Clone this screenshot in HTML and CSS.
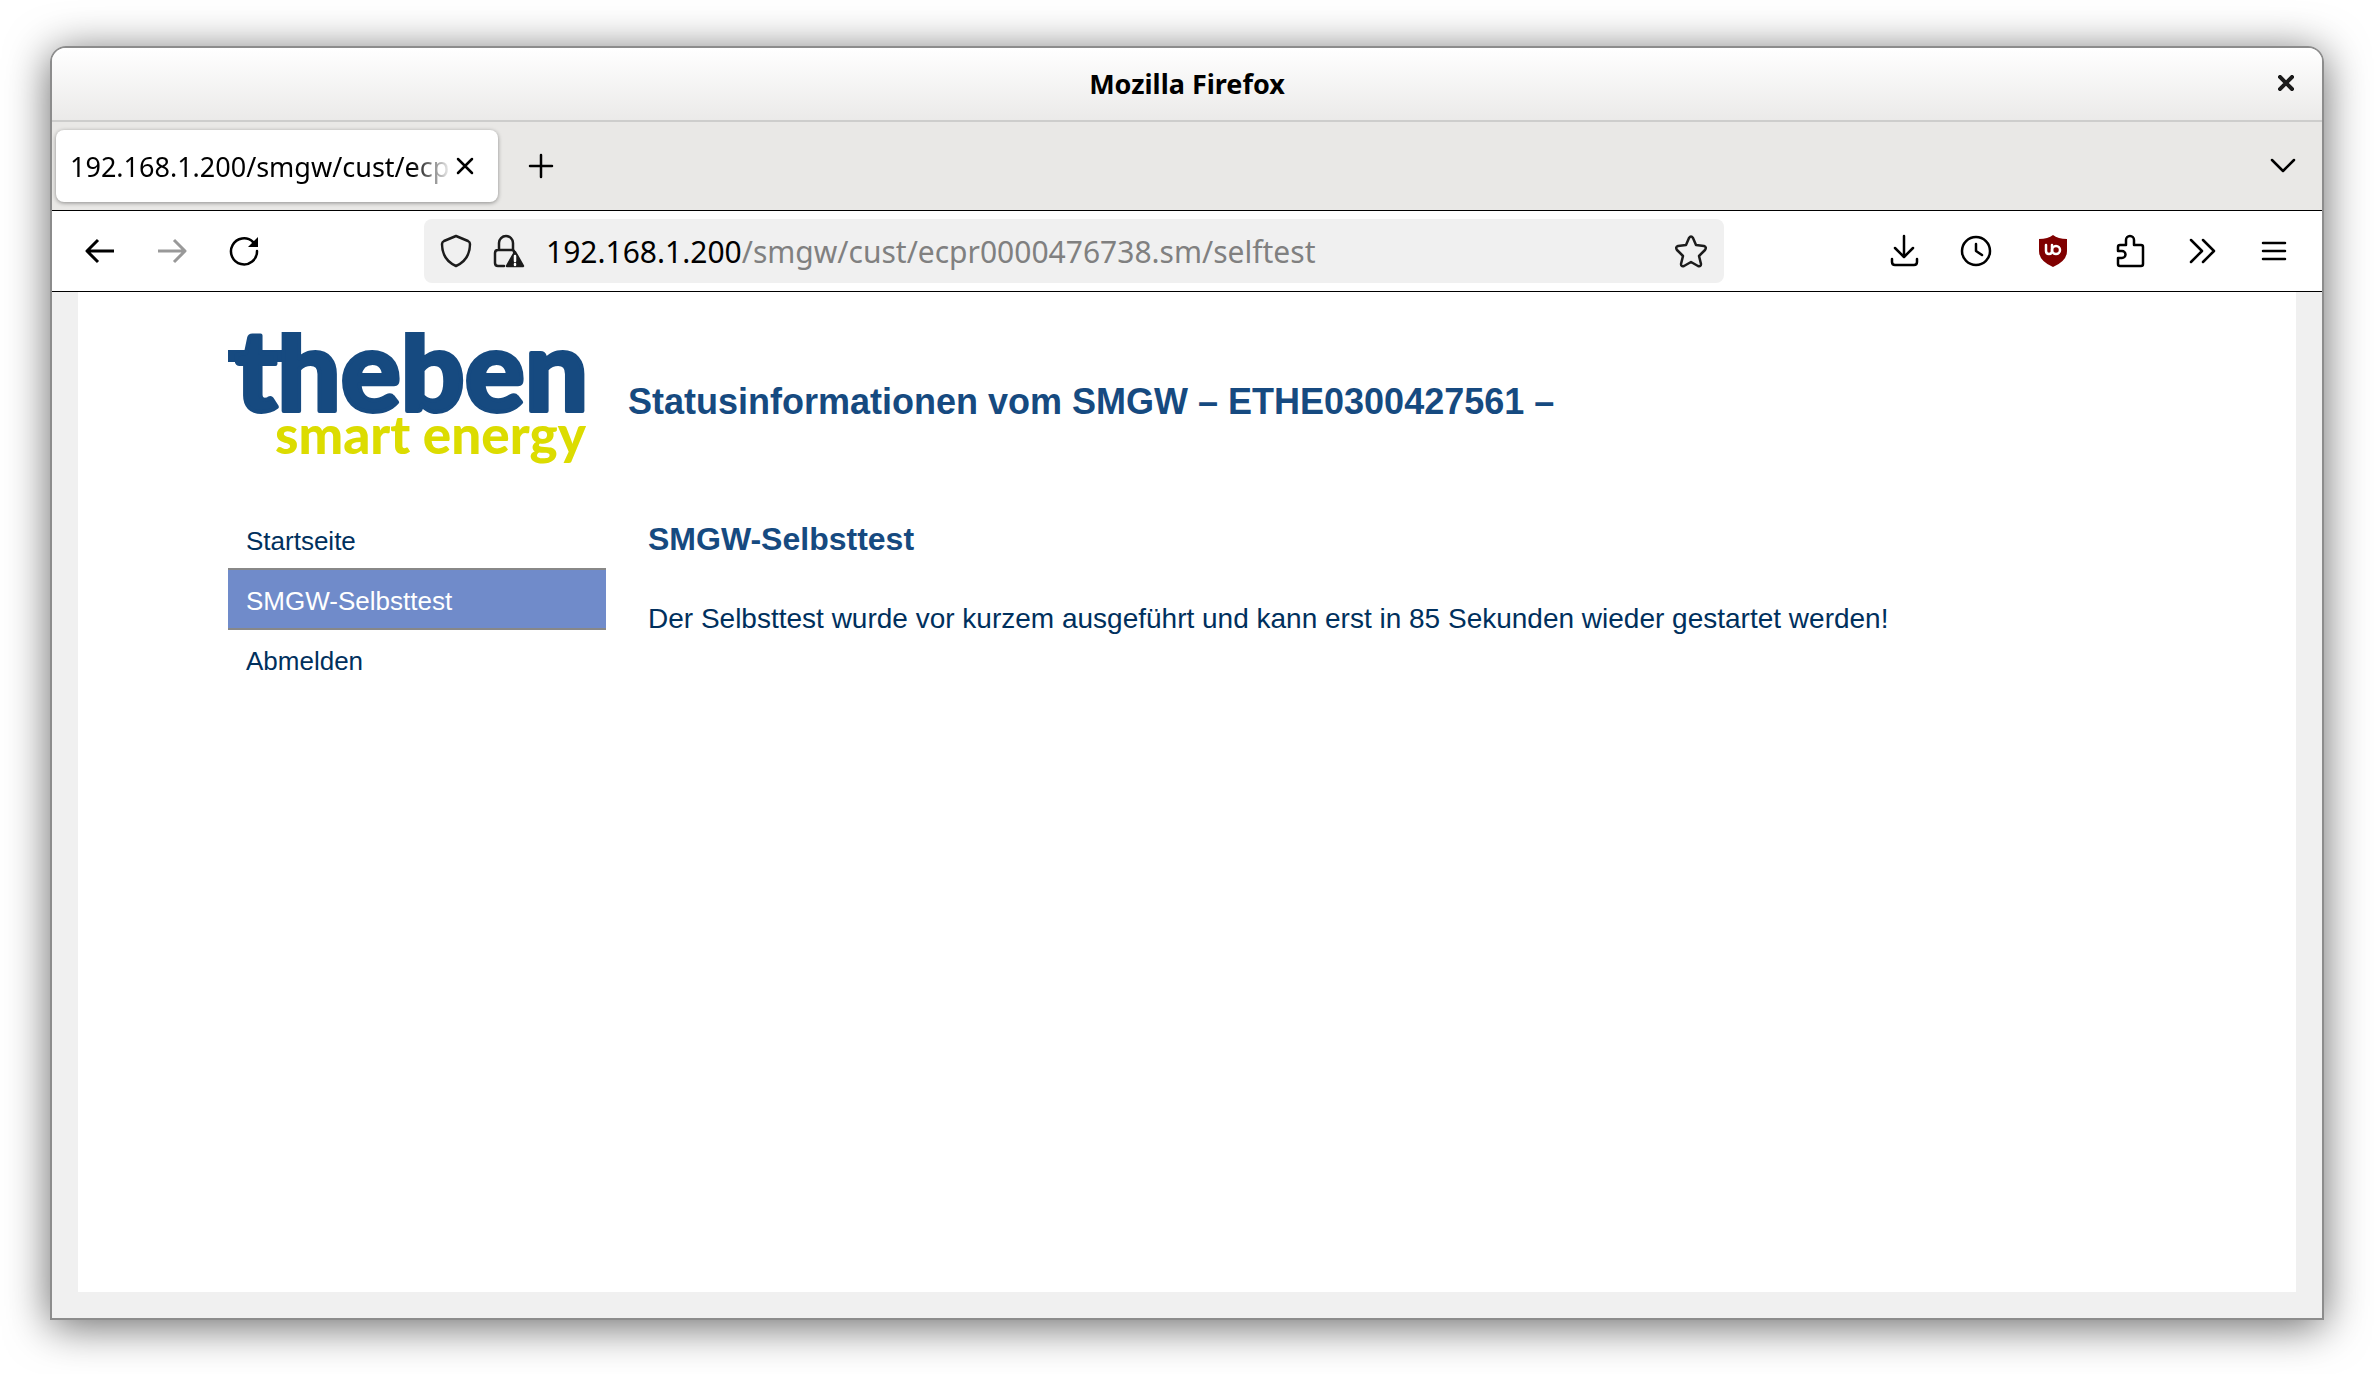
FILE: index.html
```
<!DOCTYPE html>
<html lang="de">
<head>
  <meta charset="UTF-8" />
  <meta name="viewport" content="width=device-width, initial-scale=1.0" />
  <title>Mozilla Firefox</title>
  <link rel="stylesheet" href="styles.css">
</head>
<body>
  <div class="window">
    <div class="titlebar">
      <span class="window-title">Mozilla Firefox</span>
      <button class="window-close" aria-label="Close window">
        <svg width="16" height="16" viewBox="0 0 16 16"><path d="M2 2l12 12M14 2L2 14" stroke="#1c1c1c" stroke-width="4" stroke-linecap="square"/></svg>
      </button>
    </div>

    <div class="tabs">
      <div class="tab">
        <span class="tab-title">192.168.1.200/smgw/cust/ecpr0000476738.sm/selftest</span>
        <button aria-label="Close tab">
          <svg width="18" height="18" viewBox="0 0 18 18"><path d="M2 2l14 14M16 2L2 16"/></svg>
        </button>
      </div>
      <button class="new-tab" aria-label="New tab">
        <svg width="26" height="26" viewBox="0 0 26 26"><path d="M13 2v22M2 13h22"/></svg>
      </button>
      <button class="tab-list" aria-label="List all tabs">
        <svg width="26" height="16" viewBox="0 0 26 16"><path d="M2 2l11 11L24 2"/></svg>
      </button>
    </div>

    <div class="toolbar">
      <div class="nav-buttons">
        <button aria-label="Back">
          <svg width="32" height="32" viewBox="0 0 32 32"><path d="M30 16H4M14 5L3 16l11 11" stroke-width="3" stroke-linecap="butt"/></svg>
        </button>
        <button class="disabled" aria-label="Forward" disabled>
          <svg width="32" height="32" viewBox="0 0 32 32"><path d="M2 16h26M18 5l11 11-11 11" stroke-width="3" stroke-linecap="butt"/></svg>
        </button>
        <button aria-label="Reload">
          <svg width="32" height="32" viewBox="0 0 32 32"><path d="M29 16A13 13 0 1 1 25 7"/><path d="M30 2v10H20z" fill="#000" stroke="none"/></svg>
        </button>
      </div>

      <div class="urlbar">
        <svg width="32" height="34" viewBox="0 0 32 34"><path d="M16 2L28 7q2 1 2 3C30 21 25 28 16 32C7 28 2 21 2 10q0-2 2-3Z" stroke="#1c1c1c"/></svg>
        <svg width="34" height="34" viewBox="0 0 34 34"><path d="M12 32H6q-3 0-3-3V19q0-3 3-3H20q2 0 2 2M7 16V9a7 7 0 0 1 14 0v7" stroke="#1c1c1c"/><path d="M23 18l8 14H15z" fill="#1c1c1c" stroke="#1c1c1c"/><path d="M23 22v5M23 30v1" stroke="#fff"/></svg>
        <div class="url" role="textbox"><span>192.168.1.200</span>/smgw/cust/ecpr0000476738.sm/selftest</div>
        <button aria-label="Bookmark this page">
          <svg width="34" height="34" viewBox="0 0 34 34"><path d="M15 4q2-3 4 0l3 7 8 1q3 1 1 4l-6 6 2 8q0 3-3 2l-7-4-7 4q-3 1-3-2l2-8-6-6q-2-3 1-4l8-1z" stroke="#1c1c1c"/></svg>
        </button>
      </div>

      <div class="tools">
        <button aria-label="Downloads">
          <svg width="32" height="34" viewBox="0 0 32 34"><path d="M16 2v20M7 14l9 9 9-9M4 25v3q0 3 3 3h19q3 0 3-3v-3"/></svg>
        </button>
        <button aria-label="History">
          <svg width="32" height="34" viewBox="0 0 32 34"><circle cx="16" cy="17" r="14"/><path d="M16 10v7l6 4"/></svg>
        </button>
        <button class="ublock" aria-label="uBlock Origin">
          <svg width="32" height="34" viewBox="0 0 32 34"><path d="M16 1q5 4 14 4v12q0 10-14 16Q2 27 2 17V5q9 0 14-4z" fill="#800000" stroke="none"/><path d="M9 11v6q0 3 3 3t3-3v-6" stroke="#fff"/><circle cx="19" cy="16" r="4" stroke="#fff"/></svg>
        </button>
        <button aria-label="Extensions">
          <svg width="32" height="34" viewBox="0 0 32 34"><path d="M4 17V13q0-2 2-2h6V6a4 4 0 0 1 8 0v5h7q2 0 2 2v17q0 2-2 2H6q-2 0-2-2v-6h4a3 3 0 0 0 0-7H4"/></svg>
        </button>
        <button aria-label="More tools">
          <svg width="32" height="34" viewBox="0 0 32 34"><path d="M5 6l11 11L5 28M17 6l11 11-11 11"/></svg>
        </button>
        <button aria-label="Open menu">
          <svg width="32" height="34" viewBox="0 0 32 34"><path d="M5 9h22M5 17h22M5 25h22"/></svg>
        </button>
      </div>
    </div>

    <div class="viewport">
      <div class="page">
        <header class="header">
          <svg class="logo" width="360" height="134" viewBox="0 0 360 134" role="img" aria-label="theben smart energy">
            <rect class="logo-bar" x="0" y="18" width="54" height="12"/>
            <text class="logo-name" x="7" y="79">theben</text>
            <text class="logo-claim" x="47" y="122">smart energy</text>
          </svg>
          <h1>Statusinformationen vom SMGW – ETHE0300427561 –</h1>
        </header>
        <div class="columns">
          <nav class="menu">
            <a href="#">Startseite</a>
            <a href="#" class="active">SMGW-Selbsttest</a>
            <a href="#">Abmelden</a>
          </nav>
          <main class="content">
            <h2>SMGW-Selbsttest</h2>
            <p>Der Selbsttest wurde vor kurzem ausgeführt und kann erst in 85 Sekunden wieder gestartet werden!</p>
          </main>
        </div>
      </div>
    </div>
  </div>
</body>
</html>
```
FILE: styles.css
```
* {
  box-sizing: border-box;
}

body {
  margin: 0;
  height: 100vh;
  padding: 46px 50px 54px;
  background: #ffffff;
  font-family: "Noto Sans", sans-serif;
}

button {
  display: flex;
  padding: 0;
  border: none;
  background: none;
  cursor: pointer;
}

svg {
  display: block;
  flex: none;
  fill: none;
  stroke: #000000;
  stroke-width: 2.5;
  stroke-linecap: round;
  stroke-linejoin: round;
}

/* window frame */
.window {
  display: flex;
  flex-direction: column;
  height: 100%;
  border: 2px solid #8c8c8c;
  border-radius: 16px 16px 0 0;
  overflow: hidden;
  box-shadow: 0 6px 44px rgba(0, 0, 0, 0.6);
}

.titlebar {
  display: flex;
  align-items: center;
  height: 74px;
  padding: 0 28px 2px;
  border-bottom: 2px solid #cdcdcc;
  background: linear-gradient(#ffffff, #ebeae9);
}

.window-title {
  flex: 1;
  padding-left: 16px;
  text-align: center;
  font-size: 27px;
  font-weight: bold;
}

/* tabs */
.tabs {
  display: flex;
  align-items: center;
  height: 89px;
  padding: 0 26px 0 4px;
  border-bottom: 1px solid #000000;
  background: #e9e8e6;
}

.tab {
  display: flex;
  align-items: center;
  gap: 4px;
  width: 442px;
  height: 72px;
  padding: 0 24px 0 14px;
  border-radius: 8px;
  background: #ffffff;
  box-shadow: 0 1px 4px rgba(0, 0, 0, 0.4);
}

.tab-title {
  flex: 1;
  overflow: hidden;
  white-space: nowrap;
  font-size: 27px;
  mask-image: linear-gradient(to left, transparent, #000000 40px);
}

.new-tab {
  margin-left: 30px;
}

.tab-list {
  margin-left: auto;
}

/* toolbar */
.toolbar {
  display: flex;
  align-items: center;
  justify-content: space-between;
  height: 81px;
  padding: 0 32px;
  border-bottom: 1px solid #000000;
  background: #ffffff;
}

.nav-buttons,
.tools {
  display: flex;
  gap: 40px;
}

.ublock {
  padding: 0 5px;
}

.disabled {
  opacity: 0.4;
}

.urlbar {
  display: flex;
  align-items: center;
  gap: 20px;
  flex: 0 1 1300px;
  height: 64px;
  padding: 0 16px;
  border-radius: 8px;
  background: #f0f0f0;
}

.url {
  flex: 1;
  color: #808080;
  font-size: 30px;
}

.url span {
  color: #000000;
}

/* page */
.viewport {
  display: flex;
  flex: 1;
  padding: 0 26px 26px;
  background: #f0f0f0;
}

.page {
  flex: 1;
  padding: 40px 150px;
  background: #ffffff;
  color: #00305d;
  font-family: "Liberation Sans", Arial, sans-serif;
}

.header {
  display: flex;
  gap: 40px;
}

.logo-bar {
  fill: #164a80;
  stroke: none;
}

.logo-name,
.logo-claim {
  font-family: Lato, sans-serif;
  font-weight: 900;
}

.logo-name {
  fill: #164a80;
  stroke: #164a80;
  stroke-width: 4;
  font-size: 112px;
}

.logo-claim {
  fill: #dcdc00;
  stroke: none;
  font-size: 53px;
}

h1,
h2,
p {
  margin: 0;
}

h1 {
  padding-top: 48px;
  color: #164a80;
  font-size: 36px;
  line-height: 44px;
}

.columns {
  display: flex;
  gap: 42px;
  padding-top: 42px;
}

.menu {
  width: 378px;
}

.menu a {
  display: block;
  margin-bottom: -2px;
  padding: 4px 18px 0;
  border: solid transparent;
  border-width: 2px 0;
  color: #00305d;
  font-size: 26px;
  line-height: 54px;
  text-decoration: none;
}

.menu .active {
  border-color: #888888;
  background: #708bca;
  color: #ffffff;
}

.content h2 {
  padding-top: 10px;
  color: #164a80;
  font-size: 32px;
  line-height: 42px;
}

.content p {
  padding-top: 40px;
  font-size: 28px;
  line-height: 38px;
}
```
